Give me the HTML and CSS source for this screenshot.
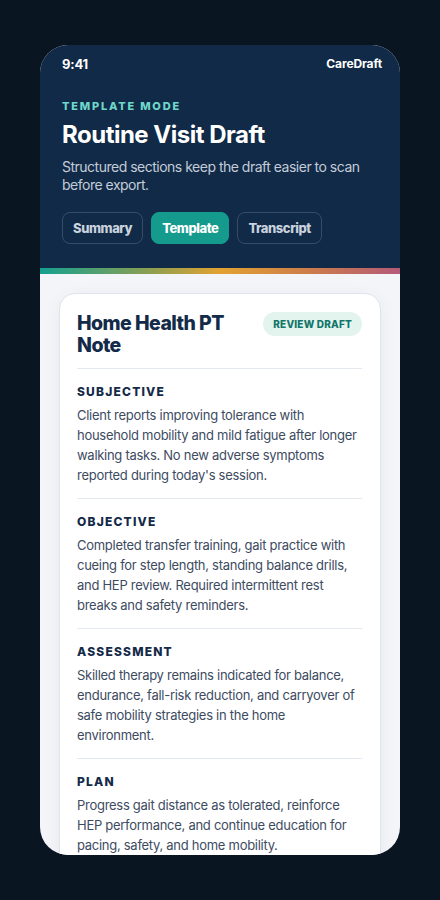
FILE: index.html
```html
<!DOCTYPE html>
<html lang="en">
<head>
<meta charset="utf-8">
<title>CareDraft</title>
<link rel="stylesheet" href="styles.css">
</head>
<body>
<div class="phone">
  <header class="hero">
    <div class="status">
      <span class="time">9:41</span>
      <span class="brand">CareDraft</span>
    </div>
    <div class="eyebrow">TEMPLATE MODE</div>
    <h1 class="title">Routine Visit Draft</h1>
    <p class="subtitle">Structured sections keep the draft easier to scan before export.</p>
    <div class="tabs">
      <span class="tab">Summary</span>
      <span class="tab active">Template</span>
      <span class="tab">Transcript</span>
    </div>
  </header>
  <div class="accent"></div>
  <main class="content">
    <section class="card">
      <div class="card-head">
        <h2 class="card-title">Home Health PT Note</h2>
        <span class="badge">REVIEW DRAFT</span>
      </div>
      <div class="section">
        <h3 class="sec-title">SUBJECTIVE</h3>
        <p class="sec-text">Client reports improving tolerance with household mobility and mild fatigue after longer walking tasks. No new adverse symptoms reported during today's session.</p>
      </div>
      <div class="section">
        <h3 class="sec-title">OBJECTIVE</h3>
        <p class="sec-text">Completed transfer training, gait practice with cueing for step length, standing balance drills, and HEP review. Required intermittent rest breaks and safety reminders.</p>
      </div>
      <div class="section">
        <h3 class="sec-title">ASSESSMENT</h3>
        <p class="sec-text">Skilled therapy remains indicated for balance, endurance, fall-risk reduction, and carryover of safe mobility strategies in the home environment.</p>
      </div>
      <div class="section">
        <h3 class="sec-title">PLAN</h3>
        <p class="sec-text">Progress gait distance as tolerated, reinforce HEP performance, and continue education for pacing, safety, and home mobility.</p>
      </div>
    </section>
  </main>
</div>
</body>
</html>
```

FILE: styles.css
```css
* { box-sizing: border-box; }
html, body { margin: 0; padding: 0; }
body {
  background: #0a1522;
  font-family: Inter, "Noto Sans", "Liberation Sans", sans-serif;
  min-height: 900px;
  padding-top: 45px;
}
.phone {
  width: 360px;
  height: 810px;
  margin: 0 auto;
  border-radius: 28px;
  overflow: hidden;
  background: #f3f5f8;
  display: flex;
  flex-direction: column;
}
.hero {
  background: #112a47;
  padding: 10px 18px 24px 22px;
}
.status {
  display: flex;
  justify-content: space-between;
  align-items: center;
  height: 17px;
  color: #ffffff;
  font-weight: 700;
}
.time { font-size: 13px; letter-spacing: -0.2px; }
.brand { font-size: 12px; letter-spacing: -0.1px; }
.eyebrow {
  margin-top: 27px;
  font-size: 11px;
  line-height: 14px;
  font-weight: 800;
  letter-spacing: 1.8px;
  color: #6fd8cb;
}
.title {
  margin: 7px 0 0;
  font-size: 24px;
  line-height: 30px;
  font-weight: 700;
  letter-spacing: -0.5px;
  color: #ffffff;
}
.subtitle {
  margin: 8px 0 0;
  font-size: 14px;
  line-height: 18px;
  letter-spacing: -0.5px;
  color: #c3ccd8;
}
.tabs {
  margin-top: 18px;
  display: flex;
  gap: 8px;
}
.tab {
  height: 32px;
  display: flex;
  align-items: center;
  padding: 0 10px;
  border-radius: 8px;
  border: 1px solid rgba(255, 255, 255, 0.16);
  color: #c9d2de;
  font-size: 13px;
  font-weight: 800;
  letter-spacing: -0.45px;
}
.tab.active {
  background: #159b8d;
  border-color: #159b8d;
  color: #ffffff;
}
.accent {
  height: 6px;
  flex: none;
  background: linear-gradient(90deg, #15a08f 0%, #8a9f52 30%, #e2a232 50%, #cd7c4a 75%, #b45a79 100%);
}
.content {
  padding: 19px 19px 0;
  flex: 1;
}
.card {
  background: #ffffff;
  border: 1px solid #dde4ec;
  border-radius: 16px;
  padding: 18px 18px 18px 17px;
  box-shadow: 0 4px 18px rgba(20, 40, 70, 0.05);
}
.card-head {
  display: flex;
  justify-content: space-between;
  align-items: flex-start;
  gap: 12px;
  padding-bottom: 12px;
}
.card-title {
  margin: 0;
  font-size: 19.5px;
  line-height: 22px;
  font-weight: 800;
  color: #132a48;
  letter-spacing: -0.55px;
  max-width: 170px;
}
.badge {
  flex: none;
  height: 24px;
  display: flex;
  align-items: center;
  padding: 0 10px;
  border-radius: 12px;
  background: #e3f4ef;
  color: #12756a;
  font-size: 10px;
  font-weight: 800;
  letter-spacing: 0.2px;
}
.section {
  border-top: 1px solid #e4e9ef;
  padding: 15px 0 13px;
}
.sec-title {
  margin: 0;
  font-size: 12px;
  line-height: 16px;
  font-weight: 800;
  letter-spacing: 1.2px;
  color: #142a48;
}
.sec-text {
  margin: 5px 0 0;
  font-size: 13px;
  line-height: 20px;
  letter-spacing: -0.28px;
  color: #3d4b5f;
}
```
